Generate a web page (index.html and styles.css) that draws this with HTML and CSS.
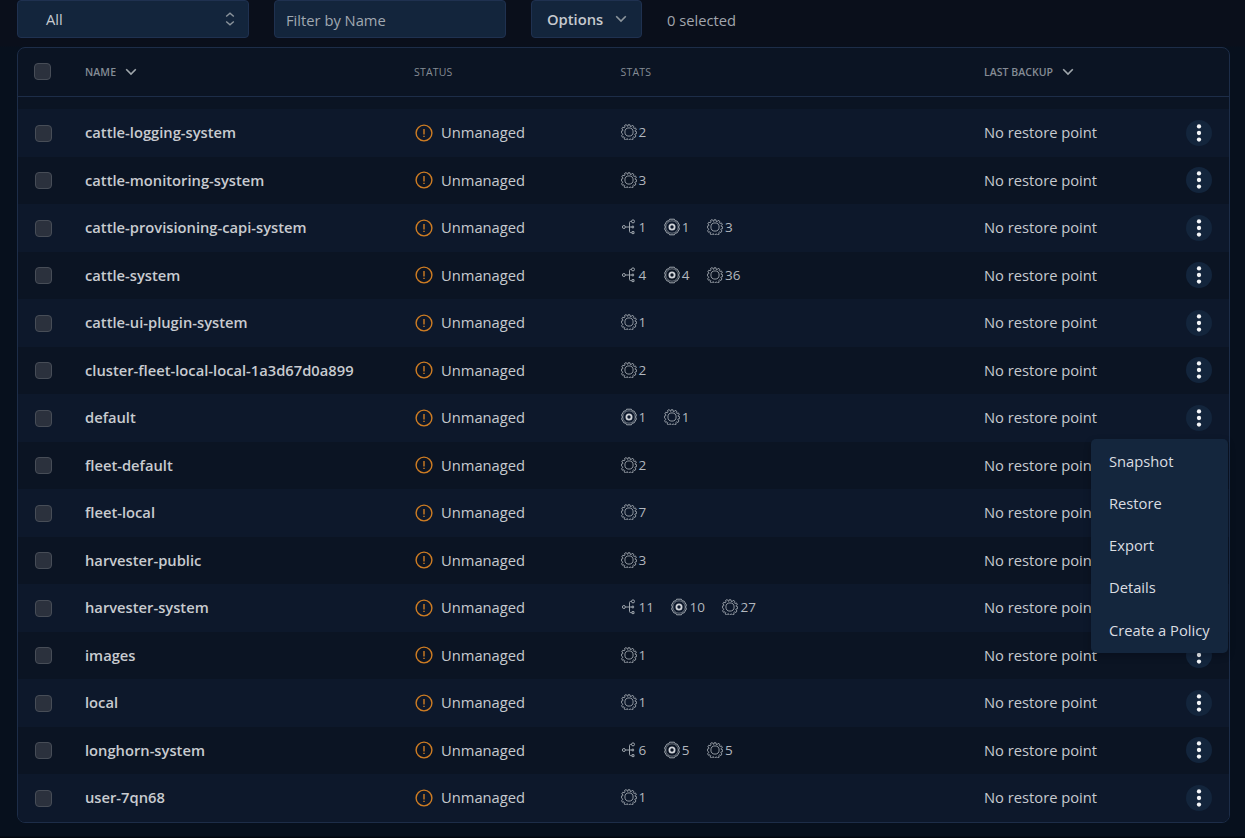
FILE: index.html
```html
<!DOCTYPE html>
<html lang="en">
<head>
<meta charset="utf-8">
<title>Namespaces</title>
<link rel="stylesheet" href="styles.css">
</head>
<body>
<svg class="sprite" aria-hidden="true">
  <symbol id="chevron" viewBox="0 0 12 8"><path d="M1.2 1.3 6 6.1l4.8-4.8"/></symbol>
  <symbol id="sort" viewBox="0 0 10 14"><path d="M1.2 4.5 5 1.2l3.8 3.3M1.2 9.5 5 12.8l3.8-3.3"/></symbol>
  <symbol id="warn" viewBox="0 0 18 18"><circle cx="9" cy="9" r="7.9"/><path d="M9 5v5.4M9 11.8v1.3"/></symbol>
  <symbol id="dots" viewBox="0 0 6 20"><circle cx="3" cy="3.4" r="2.15"/><circle cx="3" cy="10" r="2.15"/><circle cx="3" cy="16.6" r="2.15"/></symbol>
  <symbol id="nodes" viewBox="0 0 16 16"><circle cx="2.900" cy="8" r="1.500"/><path d="M4.400 8h6.800M10.800 2.400H9.700c-.8 0-1.200.4-1.200 1.200v8.800c0 .8.4 1.200 1.200 1.200h1.100"/><circle cx="12" cy="2.400" r="1.500"/><path d="M11 7.200h1.600v1.600H11zM11 12.600h2v2h-2z"/></symbol>
  <symbol id="ring" viewBox="0 0 18 18"><path class="edge" d="M6.600 1.200h4.800l.8 1.600 2 .4 2.200 3.800-.8 2 .8 2-2.200 3.800-2 .4-.8 1.600H6.600l-.8-1.600-2-.4L1.600 11l.8-2-.8-2 2.200-3.800 2-.4z"/><circle class="inner" cx="9" cy="9" r="6.200"/><circle class="core" cx="9" cy="9" r="2.600"/></symbol>
  <symbol id="gear" viewBox="0 0 16 16"><path class="edge" d="M6.800 2.400 7 .8h2l.2 1.600 1 .3.900-1.400 1.700 1-.6 1.500.7.700 1.500-.6 1 1.700-1.400.9.300 1 1.300.2v2l-1.500.2-.3.900 1.200 1-1 1.700-1.500-.6-.8.800.5 1.500-1.700 1-.9-1.300-1 .3-.2 1.400H7l-.2-1.600-1-.3-1 1.300-1.700-1 .6-1.500-.7-.7-1.500.5-1-1.700 1.300-1-.3-.9L.400 9V7l1.300-.2.3-1L.8 4.900l1-1.700 1.500.6.8-.8-.6-1.500 1.700-1 .9 1.400z"/><circle class="edge" cx="8" cy="8" r="4.100"/></symbol>
</svg>

<div class="toolbar">
  <div class="field select"><span>All</span><svg class="sort"><use href="#sort"/></svg></div>
  <div class="field filter">Filter by Name</div>
  <div class="field options"><span>Options</span><svg class="chevron"><use href="#chevron"/></svg></div>
  <span class="count">0 selected</span>
</div>

<div class="table">
  <div class="head grid">
    <span class="box"></span>
    <span class="label sortable">NAME<svg class="chevron"><use href="#chevron"/></svg></span>
    <span class="label">STATUS</span>
    <span class="label">STATS</span>
    <span class="label sortable">LAST BACKUP<svg class="chevron"><use href="#chevron"/></svg></span>
  </div>
  <div class="rows" id="rows"></div>
</div>
<script src="script.js"></script>
</body>
</html>
```
FILE: styles.css
```css
* { box-sizing: border-box; }
body {
  margin: 0;
  height: 838px;
  overflow: hidden;
  background: linear-gradient(#0a0f1b 0, #0a0f1b 46px, #07101d 47px, #07101d 836px, #02070f 837px);
  color: #c6cacf;
  font: 14.72px/20px "Open Sans", "Noto Sans", sans-serif;
}
svg { display: block; fill: none; flex: none; }
.sprite { position: absolute; width: 0; height: 0; }

.toolbar { display: flex; height: 46.5px; padding-left: 17px; align-items: flex-start; }
.field {
  display: flex;
  align-items: center;
  justify-content: space-between;
  height: 38px;
  border: 1px solid #1f3150;
  border-radius: 4px;
  background: #13253c;
}
.select { width: 231.5px; padding: 0 13px 1px 28px; font-weight: 500; }
.filter { width: 231.5px; margin-left: 25.5px; padding: 1px 0 0 11px; color: #a0a8b1; }
.options { width: 111px; margin-left: 25.500px; padding: 0 14px 1px 15px; font-weight: 600; }
.count { margin: 9.500px 0 0 25px; color: #a1a5ad; }
.sort { width: 10px; height: 14px; margin-top: 1px; stroke: #8b949c; stroke-width: 1.4; }
.chevron { width: 12px; height: 8px; stroke: #8d969d; stroke-width: 1.6; }

.table {
  width: 1213px;
  height: 776px;
  margin-left: 17px;
  border: 1px solid #1d2d48;
  border-radius: 8px;
  background: #0b1423;
}
.grid { display: grid; grid-template-columns: 67px 329px 206.5px 363.5px 203px 1fr; align-items: center; }
.head { height: 49px; border-bottom: 1px solid #1d2d48; }
.label { color: #858c95; font-size: 10.5px; font-weight: 600; letter-spacing: .1px; }
.label:nth-child(3), .label:nth-child(4) { font-weight: 500; letter-spacing: .2px; }
.label:nth-child(5) { letter-spacing: .05px; }
.sortable { display: flex; align-items: center; gap: 9px; }
.sortable .chevron { stroke: #a0a7ac; }
.box { width: 17px; height: 17px; margin-left: 16px; border: 1px solid #474d57; border-radius: 4px; background: #2b313d; }
.row .box { margin: 1px 0 0 17px; }

.rows { padding-top: 12.5px; }
.row { height: 47.5px; }
.row:nth-child(odd) { background: #0d182b; }
.row:last-child { border-radius: 0 0 7px 7px; }
.name { font-weight: 600; color: #c8cbd0; }
.name, .backup { margin-top: -1px; }
.status { display: flex; align-items: center; gap: 8px; padding-left: 1px; margin-top: -1px; }
.warn { width: 18px; height: 18px; margin-top: 1px; stroke: #cf7d23; stroke-width: 1.4; }
.stats { display: flex; gap: 17.5px; margin-top: -1px; }
.stat { display: flex; align-items: center; gap: 2px; height: 18px; font-size: 13.5px; color: #b2b7be; }
.stat svg { width: 16px; height: 16px; stroke: #9da4ac; }
.stat .ring { width: 18px; height: 18px; margin: 0 -1px; stroke: #adb3ba; }
.nodes { stroke-width: 1; }
.edge { stroke-width: .9; }
.inner { stroke-width: .6; }
.core { stroke: #d0d3d8; stroke-width: 1.8; }
.action {
  position: relative;
  display: grid;
  place-items: center;
  width: 26px;
  height: 26px;
  margin-left: -1px;
  border-radius: 50%;
  background: #13253c;
}
.dots { width: 6px; height: 20px; fill: #f4f6f8; }
.menu {
  position: absolute;
  z-index: 2;
  top: 34px;
  right: -16px;
  width: 137px;
  height: 214px;
  padding: 1px 0 0 18px;
  border-radius: 5px;
  background: #14263d;
  box-shadow: 0 3px 7px rgba(0, 4, 12, .25);
  color: #dadde1;
}
.item { display: flex; align-items: center; height: 42.2px; white-space: nowrap; }
```
FILE: script.js
```js
const namespaces = [
  ["cattle-logging-system", { gear: 2 }],
  ["cattle-monitoring-system", { gear: 3 }],
  ["cattle-provisioning-capi-system", { nodes: 1, ring: 1, gear: 3 }],
  ["cattle-system", { nodes: 4, ring: 4, gear: 36 }],
  ["cattle-ui-plugin-system", { gear: 1 }],
  ["cluster-fleet-local-local-1a3d67d0a899", { gear: 2 }],
  ["default", { ring: 1, gear: 1 }],
  ["fleet-default", { gear: 2 }],
  ["fleet-local", { gear: 7 }],
  ["harvester-public", { gear: 3 }],
  ["harvester-system", { nodes: 11, ring: 10, gear: 27 }],
  ["images", { gear: 1 }],
  ["local", { gear: 1 }],
  ["longhorn-system", { nodes: 6, ring: 5, gear: 5 }],
  ["user-7qn68", { gear: 1 }],
];
const openMenu = "default";
const actions = ["Snapshot", "Restore", "Export", "Details", "Create a Policy"];

const icon = (id) => `<svg class="${id}"><use href="#${id}"/></svg>`;
const menu = `<div class="menu">${actions.map((a) => `<div class="item">${a}</div>`).join("")}</div>`;

document.getElementById("rows").innerHTML = namespaces.map(([name, stats]) => `
  <div class="row grid">
    <span class="box"></span>
    <span class="name">${name}</span>
    <span class="status">${icon("warn")}Unmanaged</span>
    <span class="stats">${Object.entries(stats).map(([k, n]) => `<span class="stat">${icon(k)}${n}</span>`).join("")}</span>
    <span class="backup">No restore point</span>
    <span class="action">${icon("dots")}${name === openMenu ? menu : ""}</span>
  </div>`).join("");
```
